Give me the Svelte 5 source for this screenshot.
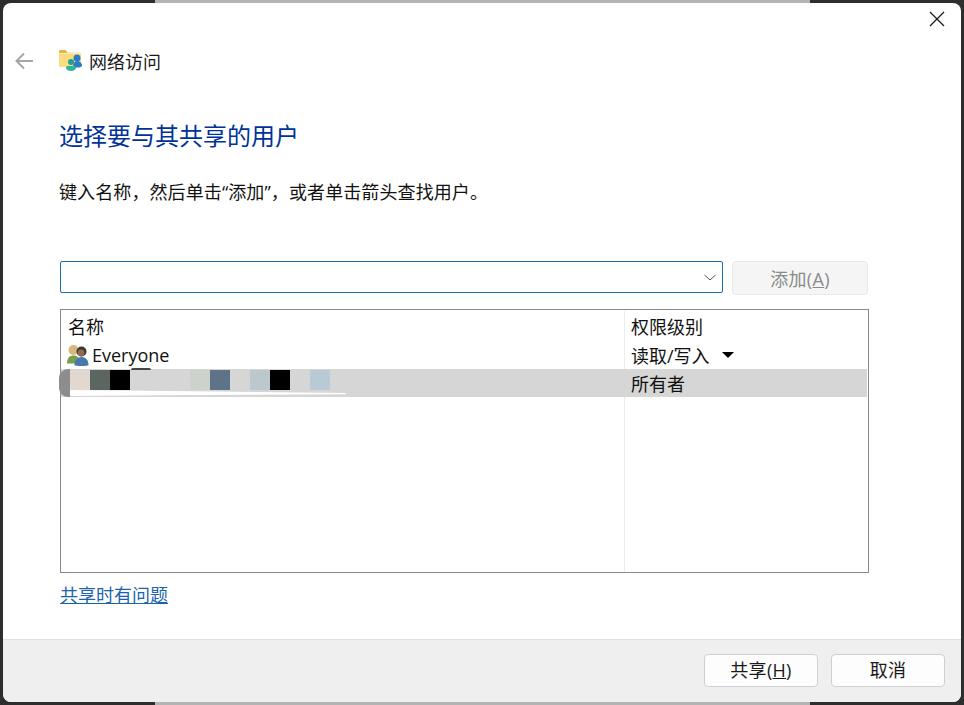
<script lang="ts">
  const blur = [
    { c: '#e2d8cf', w: 20 },
    { c: '#5c6660', w: 20 },
    { c: '#000000', w: 20 },
    { c: '#d6d6d6', w: 60 },
    { c: '#cdd2cd', w: 20 },
    { c: '#5f7388', w: 20 },
    { c: '#d6d6d6', w: 20 },
    { c: '#bcc7ce', w: 20 },
    { c: '#000000', w: 20 },
    { c: '#d6d6d6', w: 20 },
    { c: '#b8cad6', w: 20 }
  ]
</script>

<div class="frame">
  <div class="window">
    <div class="titlebar">
      <svg class="back" width="20" height="18" viewBox="0 0 20 18">
        <path d="M18 9H2M9 1.500L1.500 9 9 16.500" fill="none" stroke="#a6a6a6" stroke-width="2" />
      </svg>
      <svg class="folder" width="24" height="24" viewBox="0 0 24 24">
        <path d="M1 2.500C1 1.700 1.700 1 2.500 1H7.500l2 2.500h12c.8 0 1.500.7 1.500 1.500v11.500c0 .8-.7 1.500-1.500 1.500h-19C1.700 18 1 17.300 1 16.500z" fill="#fbdc83" />
        <path d="M1 2.500C1 1.700 1.700 1 2.500 1H7.500l2 3H1z" fill="#eeb43a" />
        <path d="M1 4h22v1H1z" fill="#fdeab5" />
        <circle cx="19" cy="9" r="3.500" fill="#2a7cc7" />
        <path d="M15 18c0-4 1.500-6 4-6s5 2 5 4.500c0 1.500-2 2-4.500 2s-4.500 0-4.500-.5z" fill="#2a7cc7" />
        <circle cx="13" cy="13" r="3" fill="#2a9c8e" />
        <path d="M8 18.500c0-1 1-1.500 2-1.500h6c1 0 2 .5 2 1.500 0 2-2 3.500-5 3.500s-5-1.500-5-3.500z" fill="#2eb5a0" />
      </svg>
      <span class="title">网络访问</span>
      <svg class="close" width="16" height="16" viewBox="0 0 16 16">
        <path d="M1 1l14 14M15 1L1 15" stroke="#1a1a1a" stroke-width="1.300" fill="none" />
      </svg>
    </div>

    <div class="content">
      <h1>选择要与其共享的用户</h1>
      <p>键入名称，然后单击“添加”，或者单击箭头查找用户。</p>

      <div class="input-row">
        <div class="combo">
          <svg width="12" height="7" viewBox="0 0 12 7">
            <path d="M.5 1l5.500 5 5.500-5" fill="none" stroke="#555" stroke-width="1" />
          </svg>
        </div>
        <button class="btn add" disabled>添加(<u>A</u>)</button>
      </div>

      <div class="table">
        <div class="row head">
          <div class="name">名称</div>
          <div class="perm">权限级别</div>
        </div>
        <div class="row">
          <div class="name user">
            <svg width="24" height="22" viewBox="0 0 24 22">
              <circle cx="7.500" cy="6" r="5" fill="#d8b67c" />
              <path d="M1 19.500c0-5.500 2.500-8 6.500-8s6.500 2.500 6.500 8z" fill="#76a04f" />
              <circle cx="15.500" cy="7.500" r="5" fill="#3f3630" />
              <circle cx="15" cy="9" r="3.400" fill="#8f6c52" />
              <path d="M8.500 21c0-5 3-8 7-8s7 3 7 8c0 .6-3 1-7 1s-7-.4-7-1z" fill="#4878ad" />
            </svg>
            <span>Everyone</span>
          </div>
          <div class="perm">读取/写入<span class="caret"></span></div>
        </div>
        <div class="row selected">
          <div class="name blurred">
            <span class="pill"></span>
            {#each blur as b}
              <span class="tile" style:background={b.c} style:width="{b.w}px"></span>
            {/each}
            <span class="smear"></span>
            <span class="mark"></span>
          </div>
          <div class="perm">所有者</div>
        </div>
        <div class="rest">
          <div class="name"></div>
          <div class="perm"></div>
        </div>
      </div>

      <a class="help" href="#help">共享时有问题</a>
    </div>

    <div class="footer">
      <button class="btn">共享(<u>H</u>)</button>
      <button class="btn">取消</button>
    </div>
  </div>
</div>

<style>
  :global(body) {
    margin: 0;
    background: #2e2e2e;
  }

  .frame {
    width: 964px;
    height: 705px;
    box-sizing: border-box;
    padding: 3px;
    background: linear-gradient(to right, #2e2e2e 155px, #b4b4b4 155px 810px, #2e2e2e 810px);
    overflow: hidden;
  }

  .window {
    height: 699px;
    width: 958px;
    background: #fff;
    border-radius: 8px;
    display: flex;
    flex-direction: column;
    font-family: "Open Sans", "Noto Sans CJK SC", sans-serif;
    color: #1a1a1a;
    overflow: hidden;
  }

  .titlebar {
    height: 80px;
    display: flex;
    align-items: center;
    padding-top: 36px;
    box-sizing: border-box;
    position: relative;
    flex: none;
  }

  .back {
    margin-left: 12px;
  }

  .folder {
    margin-left: 23px;
  }

  .title {
    margin-left: 7px;
    font-size: 18px;
  }

  .close {
    position: absolute;
    top: 8px;
    right: 16px;
  }

  .content {
    flex: 1;
    padding: 0 93px 0 57px;
  }

  h1 {
    margin: 0 0 0 -1px;
    padding-top: 36px;
    font-size: 24px;
    line-height: 34px;
    font-weight: 400;
    color: #003399;
  }

  p {
    margin: 26px 0 0 -1px;
    font-size: 18px;
    line-height: 26px;
    letter-spacing: 0.1px;
    color: #111;
  }

  .input-row {
    display: flex;
    margin-top: 56px;
    gap: 9px;
    align-items: flex-start;
  }

  .combo {
    flex: 1;
    height: 32px;
    box-sizing: border-box;
    border: 1px solid #1a6ea8;
    border-radius: 2px;
    display: flex;
    align-items: center;
    justify-content: flex-end;
    padding-right: 6px;
  }

  .btn {
    font-family: inherit;
    width: 114px;
    height: 33px;
    padding: 0 0 2px;
    font-size: 18px;
    line-height: 1;
    letter-spacing: 0.3px;
    color: #1a1a1a;
    background: #fdfdfd;
    border: 1px solid #cfcfcf;
    border-radius: 4px;
  }

  .add {
    width: 136px;
    height: 34px;
    padding: 1px 0 0;
    color: #8a8a8a;
    background: #f5f5f5;
    border-color: #e8e8e8;
  }

  .table {
    margin-top: 14px;
    width: 809px;
    height: 264px;
    box-sizing: border-box;
    border: 1px solid #8a8a8a;
    display: flex;
    flex-direction: column;
    font-size: 18px;
    color: #111;
  }

  .row {
    display: flex;
    height: 28px;
    flex: none;
  }

  .head {
    height: 31px;
    padding-top: 1px;
    box-sizing: border-box;
  }

  .name {
    width: 564px;
    box-sizing: border-box;
    padding-left: 7px;
    flex: none;
    display: flex;
    align-items: center;
    border-right: 1px solid #ececec;
  }

  .perm {
    flex: 1;
    padding-left: 6px;
    display: flex;
    align-items: center;
  }

  .user {
    padding-left: 5px;
  }

  .user span {
    margin-left: 2px;
  }

  .caret {
    width: 0;
    height: 0;
    margin-left: 12px;
    border-left: 6px solid transparent;
    border-right: 6px solid transparent;
    border-top: 6px solid #000;
  }

  .selected {
    background: #d6d6d6;
    margin-right: 1px;
  }

  .blurred {
    padding-left: 0;
    position: relative;
    align-items: flex-start;
    border-right-color: transparent;
  }

  .pill {
    width: 11px;
    height: 28px;
    background: #8d8d8d;
    border-radius: 9px 0 0 9px;
    margin-left: -2px;
    flex: none;
  }

  .tile {
    height: 20px;
    margin-top: 1px;
    flex: none;
  }

  /* leftovers of the redaction around the user name */
  .smear {
    position: absolute;
    left: 9px;
    top: 21px;
    width: 276px;
    height: 6px;
    background: #fff;
    clip-path: polygon(0 0, 45% 20%, 100% 50%, 100% 70%, 45% 85%, 0 100%);
  }

  .mark {
    position: absolute;
    left: 70px;
    top: -1px;
    width: 20px;
    height: 2px;
    background: #444;
    border-radius: 2px 2px 0 0;
  }

  .rest {
    flex: 1;
    display: flex;
  }

  .help {
    display: inline-block;
    margin-top: 9px;
    font-size: 18px;
    line-height: 26px;
    color: #1a64ad;
  }

  .footer {
    height: 63px;
    flex: none;
    box-sizing: border-box;
    background: #efefef;
    border-top: 1px solid #e0e0e0;
    display: flex;
    justify-content: flex-end;
    gap: 13px;
    padding: 14px 16px 0 0;
  }
</style>
